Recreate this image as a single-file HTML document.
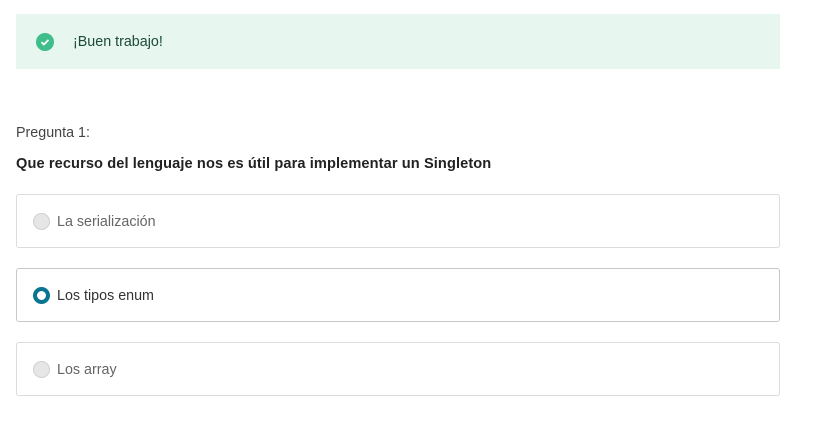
<!DOCTYPE html>
<html><head><style>
body{margin:0;background:#fff;font-family:"Liberation Sans",sans-serif;width:820px;height:428px;position:relative;overflow:hidden}
.banner{position:absolute;left:16px;top:14px;width:764px;height:55px;background:#e7f6ef}
.banner .ic{position:absolute;left:20px;top:19px;width:18px;height:18px;border-radius:50%;background:#3fbd8a}
.banner span{position:absolute;left:57px;top:20px;font-size:14.3px;color:#1d4a3a}
.t{position:absolute;left:16px;font-size:14.3px;color:#333}
.opt{position:absolute;left:16px;width:762px;height:52px;border:1px solid #dcdcdc;border-radius:3px}
.opt .r{position:absolute;left:16px;top:18px;width:15px;height:15px;border-radius:50%;background:#e6e6e6;border:1px solid #d0d0d0}
.opt span{position:absolute;left:40px;top:19px;font-size:14.3px;color:#666}
</style></head><body>
<div class="banner"><div class="ic"><svg width="18" height="18"><path d="M5.5 9.2l2.4 2.3 4.6-4.6" stroke="#fff" stroke-width="1.8" fill="none"/></svg></div><span>¡Buen trabajo!</span></div>
<div class="t" style="top:125px;color:#444">Pregunta 1:</div>
<div class="t" style="top:156px;font-weight:bold;color:#222;font-size:14.6px;letter-spacing:0.1px">Que recurso del lenguaje nos es útil para implementar un Singleton</div>
<div class="opt" style="top:194px"><div class="r"></div><span>La serialización</span></div>
<div class="opt" style="top:268px;border-color:#c8c8c8"><div class="r" style="background:#fff;border:4px solid #0a7591;width:9px;height:9px"></div><span style="color:#333">Los tipos enum</span></div>
<div class="opt" style="top:342px"><div class="r"></div><span>Los array</span></div>
</body></html>
